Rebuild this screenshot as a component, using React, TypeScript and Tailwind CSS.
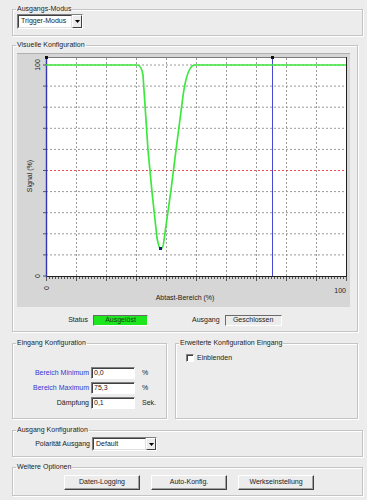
import React from "react";

const font = { fontFamily: '"Liberation Sans", Arial, sans-serif' };

function Legend({ children }: { children: React.ReactNode }) {
  return <legend className="ml-[3px] px-[1px] text-[7px] leading-[8px] text-[#222]">{children}</legend>;
}

function SelectBox({ value, w }: { value: string; w: string }) {
  return (
    <div className={`flex h-full ${w} items-stretch border border-t-[#808080] border-l-[#808080] border-r-white border-b-white bg-white`}>
      <div className="flex flex-1 items-center border border-t-[#404040] border-l-[#404040] border-r-[#e0e0e0] border-b-[#e0e0e0] pl-[2px] text-[7px]">
        {value}
      </div>
      <div className="flex w-[10px] items-center justify-center border border-t-white border-l-white border-r-[#404040] border-b-[#404040] bg-[#ececec]">
        <svg width="5" height="3" viewBox="0 0 5 3"><path d="M0 0H5L2.5 3Z" fill="#000" /></svg>
      </div>
    </div>
  );
}

function Btn({ label, w }: { label: string; w: string }) {
  return (
    <div className={`flex h-[15px] ${w} items-center justify-center border border-t-white border-l-white border-r-[#404040] border-b-[#404040] bg-[#ececec] text-[7px] shadow-[inset_-1px_-1px_0_#a0a0a0]`}>
      {label}
    </div>
  );
}

function Input({ value }: { value: string }) {
  return (
    <div className="flex h-[12px] w-[44px] items-center border border-t-[#808080] border-l-[#808080] border-r-white border-b-white bg-white pl-[2px] text-[7px] shadow-[inset_1px_1px_0_#404040]">
      {value}
    </div>
  );
}

function Chart() {
  const vx = [76, 106, 136, 166, 196, 226, 256, 286, 316];
  const hy = [1, 2, 3, 4, 6, 7, 8, 9].map((k) => 65 + 21.1 * k);
  const minor: number[] = [];
  for (let x = 46; x <= 346; x += 3) minor.push(x);
  const leftTicks = [0, 1, 2, 3, 4, 5, 6, 7, 8, 9, 10].map((k) => 65 + 21.1 * k);
  return (
    <svg width="333" height="254" viewBox="17 53 333 254" style={{ display: "block" }}>
      <rect x="17" y="53" width="333" height="254" fill="#d6d6d6" />
      <line x1="17" y1="53.5" x2="350" y2="53.5" stroke="#b0b0b0" />
      <rect x="46" y="57" width="300" height="219" fill="#fff" />
      <line x1="46" y1="57.5" x2="346" y2="57.5" stroke="#7a7a7a" />
      {vx.map((x) => (
        <line key={x} x1={x + 0.5} y1="58" x2={x + 0.5} y2="276" stroke="#9a9a9a" strokeDasharray="2 2" />
      ))}
      {[65, ...hy].map((y) => (
        <line key={y} x1="46" y1={y} x2="346" y2={y} stroke="#9a9a9a" strokeDasharray="2 2" />
      ))}
      <line x1="46" y1="170.5" x2="346" y2="170.5" stroke="#f04a4a" strokeDasharray="2 2" />
      <line x1="346.5" y1="57" x2="346.5" y2="277" stroke="#222" />
      <line x1="46" y1="276.5" x2="347" y2="276.5" stroke="#222" />
      {minor.map((x) => (
        <line key={x} x1={x + 0.5} y1="277" x2={x + 0.5} y2={(x - 46) % 30 === 0 ? 281 : 279} stroke="#333" strokeWidth="0.8" />
      ))}
      {leftTicks.map((y) => (
        <line key={y} x1="43" y1={y} x2="46" y2={y} stroke="#333" strokeWidth="0.8" />
      ))}
      <line x1="46.5" y1="58" x2="46.5" y2="277" stroke="#3434b4" strokeWidth="1.4" />
      <line x1="272.5" y1="58" x2="272.5" y2="276" stroke="#4848d0" />
      <path
        d="M46 65 L137 65 C140 65 142 69 143 75 L148 150 L152 192 L157 238 Q159 249 161 249 Q163 249 164 240 L171 190 L176 150 L183 96 Q187 67 194 65 L346 65"
        fill="none"
        stroke="#3ce83c"
        strokeWidth="1.7"
      />
      <rect x="159" y="247" width="3" height="3" fill="#1b1b7a" />
      <rect x="45" y="56" width="3" height="3" fill="#111" />
      <rect x="271" y="56" width="3" height="3" fill="#111" />
      <g fontFamily='"Liberation Sans", Arial, sans-serif' fontSize="7" fill="#222">
        <text x="40" y="65" textAnchor="middle" transform="rotate(-90 40 65)">100</text>
        <text x="40" y="276" textAnchor="middle" transform="rotate(-90 40 276)">0</text>
        <text x="32" y="176" textAnchor="middle" transform="rotate(-90 32 176)">Signal (%)</text>
        <text x="48.5" y="288" textAnchor="middle" transform="rotate(-90 48.5 288)">0</text>
        <text x="346" y="293" textAnchor="end">100</text>
        <text x="185" y="300" textAnchor="middle">Abtast-Bereich (%)</text>
      </g>
    </svg>
  );
}

const fs = "border border-[#c4c4c4] shadow-[inset_1px_1px_0_#fff,1px_1px_0_#fff]";

export default function App() {
  return (
    <div className="relative flex h-[500px] w-[367px] flex-col overflow-hidden bg-[#ececec] text-[7px] text-[#222]" style={font}>
      <fieldset className={`${fs} ml-[12px] mt-[5px] w-[351px] pt-[1px] pb-[6px]`}>
        <Legend>Ausgangs-Modus</Legend>
        <div className="h-[15px] pl-[4px]">
          <SelectBox value="Trigger-Modus" w="w-[66px]" />
        </div>
      </fieldset>

      <fieldset className={`${fs} ml-[12px] mt-[5px] w-[346px] pt-[4px] pb-[4px]`}>
        <Legend>Visuelle Konfiguration</Legend>
        <div className="pl-[4px]">
          <Chart />
        </div>
        <div className="mt-[6px] flex h-[14px] items-center">
          <span className="w-[75px] text-right">Status</span>
          <div className="ml-[5px] flex h-[11px] w-[55px] items-center justify-center border border-t-[#6a6a6a] border-l-[#6a6a6a] border-r-white border-b-white bg-[#1ee61e] text-[#1a3a1a]">
            Ausgelöst
          </div>
          <span className="ml-[44px]">Ausgang</span>
          <div className="ml-[5px] flex h-[11px] w-[57px] items-center justify-center border border-t-[#6a6a6a] border-l-[#6a6a6a] border-r-white border-b-white">
            Geschlossen
          </div>
        </div>
      </fieldset>

      <div className="ml-[12px] mt-[7px] flex gap-[8px]">
        <fieldset className={`${fs} h-[80px] w-[155px] pt-[20px]`}>
          <Legend>Eingang Konfiguration</Legend>
          <div className="flex flex-col gap-[3px]">
            {[
              { l: "Bereich Minimum", v: "0,0", u: "%", blue: true },
              { l: "Bereich Maximum", v: "75,3", u: "%", blue: true },
              { l: "Dämpfung", v: "0,1", u: "Sek.", blue: false },
            ].map((r) => (
              <div key={r.l} className="flex h-[12px] items-center">
                <span className={`w-[76px] text-right ${r.blue ? "text-[#3636d2]" : ""}`}>{r.l}</span>
                <div className="ml-[2px]">
                  <Input value={r.v} />
                </div>
                <span className="ml-[7px]">{r.u}</span>
              </div>
            ))}
          </div>
        </fieldset>
        <fieldset className={`${fs} h-[80px] w-[183px] pt-[6px]`}>
          <Legend>Erweiterte Konfiguration Eingang</Legend>
          <div className="flex items-center pl-[10px]">
            <div className="h-[8px] w-[8px] border border-t-[#808080] border-l-[#808080] border-r-white border-b-white bg-white shadow-[inset_1px_1px_0_#404040]" />
            <span className="ml-[3px]">Einblenden</span>
          </div>
        </fieldset>
      </div>

      <fieldset className={`${fs} ml-[12px] mt-[7px] w-[351px] pt-[3px] pb-[5px]`}>
        <Legend>Ausgang Konfiguration</Legend>
        <div className="flex h-[14px] items-center">
          <span className="w-[77px] text-right">Polarität Ausgang</span>
          <div className="ml-[2px] h-[14px]">
            <SelectBox value="Default" w="w-[65px]" />
          </div>
        </div>
      </fieldset>

      <fieldset className={`${fs} ml-[12px] mt-[6px] w-[351px] pt-[4px] pb-[5px]`}>
        <Legend>Weitere Optionen</Legend>
        <div className="flex pl-[51px]">
          <Btn label="Daten-Logging" w="w-[76px]" />
          <div className="ml-[11px]"><Btn label="Auto-Konfig." w="w-[76px]" /></div>
          <div className="ml-[11px]"><Btn label="Werkseinstellung" w="w-[76px]" /></div>
        </div>
      </fieldset>
    </div>
  );
}
